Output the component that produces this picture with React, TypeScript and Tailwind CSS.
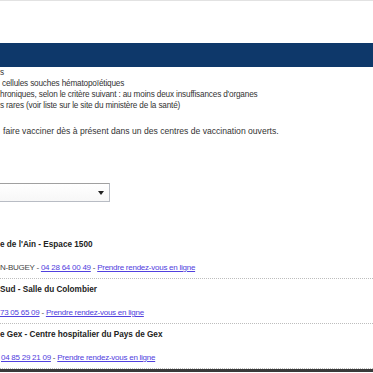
import React from "react";

const Link = ({ children }: { children: React.ReactNode }) => (
  <span className="text-[#5140de] underline">{children}</span>
);

const Entry = ({
  title,
  pre,
  phone,
  phoneOffset,
}: {
  title: string;
  pre?: string;
  phone: string;
  phoneOffset: string;
}) => (
  <div className="pt-[5px] pb-[5px] border-b border-dotted border-[#bdbdbd]">
    <div className="h-[11px] text-[8.2px] font-bold text-[#222] whitespace-nowrap">{title}</div>
    <div className={`mt-[12px] h-[11px] text-[8px] tracking-[-0.25px] whitespace-nowrap text-[#444] ${phoneOffset}`}>
      {pre ? <span>{pre}</span> : null}
      <Link>{phone}</Link>
      <span> - </span>
      <Link>Prendre rendez-vous en ligne</Link>
    </div>
  </div>
);

export default function App() {
  return (
    <div className="w-[373px] h-[373px] overflow-hidden bg-white font-['Liberation_Sans',Arial,sans-serif] leading-[11px] text-[#333]">
      <div className="h-px bg-[#e2e2e2]" />
      <div className="h-[42px]" />
      <div className="h-[24px] bg-[#0e386a]" />
      <div className="whitespace-nowrap text-[8.2px] tracking-[-0.16px]">
        <div className="h-[11px]">s</div>
        <div className="h-[11px] pl-[2px]">cellules souches hématopoïétiques</div>
        <div className="h-[11px]">hroniques, selon le critère suivant : au moins deux insuffisances d'organes</div>
        <div className="h-[11px]">s rares (voir liste sur le site du ministère de la santé)</div>
      </div>
      <div className="mt-[15px] h-[11px] pl-[3px] whitespace-nowrap text-[8.6px]">
        faire vacciner dès à présent dans un des centres de vaccination ouverts.
      </div>
      <div className="mt-[46px] h-[19px] w-[110px] border border-[#b8bcc4] border-t-[#a0a0a0] border-l-0 bg-gradient-to-b from-white to-[#f7f7f7] flex items-center justify-end pr-[5px]">
        <svg width="6" height="4" viewBox="0 0 6 4">
          <path d="M0 0 H6 L3 4 Z" fill="#222" />
        </svg>
      </div>
      <div className="mt-[32px]">
        <Entry
          title="e de l'Ain - Espace 1500"
          pre="N-BUGEY - "
          phone="04 28 64 00 49"
          phoneOffset=""
        />
        <Entry
          title="Sud - Salle du Colombier"
          phone="73 05 65 09"
          phoneOffset=""
        />
        <Entry
          title="e Gex - Centre hospitalier du Pays de Gex"
          phone="04 85 29 21 09"
          phoneOffset="pl-[1px]"
        />
      </div>
      <div className="h-[3px] bg-[#3a3a3a]" />
    </div>
  );
}
